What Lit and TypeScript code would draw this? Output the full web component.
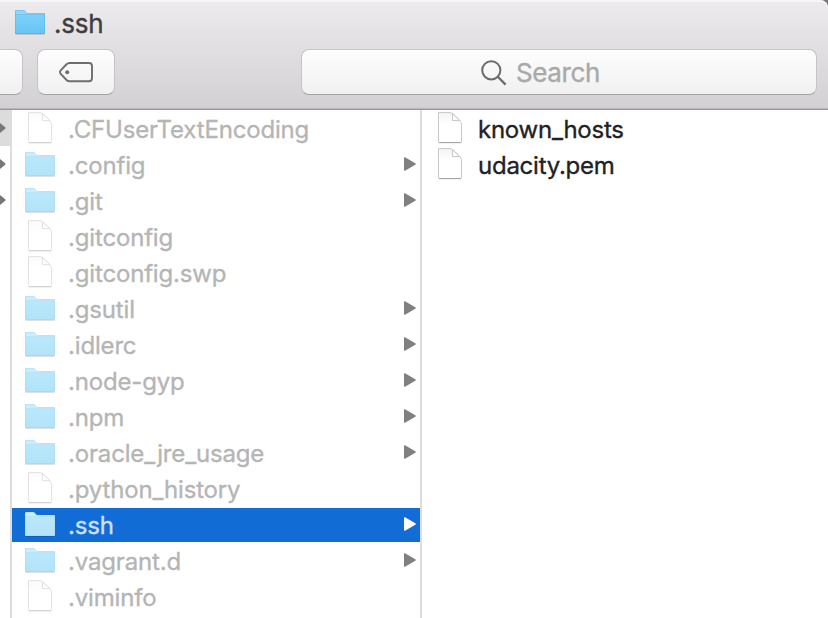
import { LitElement, html, svg, css, nothing } from "lit";
import { customElement, property } from "lit/decorators.js";

type Kind = "file" | "folder";
interface Entry {
  name: string;
  kind: Kind;
  selected?: boolean;
}

const home: Entry[] = [
  { name: ".CFUserTextEncoding", kind: "file" },
  { name: ".config", kind: "folder" },
  { name: ".git", kind: "folder" },
  { name: ".gitconfig", kind: "file" },
  { name: ".gitconfig.swp", kind: "file" },
  { name: ".gsutil", kind: "folder" },
  { name: ".idlerc", kind: "folder" },
  { name: ".node-gyp", kind: "folder" },
  { name: ".npm", kind: "folder" },
  { name: ".oracle_jre_usage", kind: "folder" },
  { name: ".python_history", kind: "file" },
  { name: ".ssh", kind: "folder", selected: true },
  { name: ".vagrant.d", kind: "folder" },
  { name: ".viminfo", kind: "file" },
];

const sshFiles: Entry[] = [
  { name: "known_hosts", kind: "file" },
  { name: "udacity.pem", kind: "file" },
];

@customElement("finder-icon")
class FinderIcon extends LitElement {
  @property() kind: Kind = "file";
  @property({ type: Boolean, reflect: true }) pale = false;
  static styles = css`
    :host { display: block; width: 32px; height: 34px; --edge: #57b5e4; --tab: #8ed8fa; --top: #7bd0f9; --bottom: #67c5f4; --paper: #f4f4f4; --line: #c8c8c8; --base: #a8a8a8; }
    :host([pale]) { --edge: #a9daf0; --tab: #c9eefd; --top: #b9e8fc; --bottom: #b3e3f8; --paper: #fafafa; --line: #e2e2e2; --base: #d2d2d2; }
    svg { display: block; }
    .edge { fill: var(--edge); }
    .tab { fill: var(--tab); }
    .top { stop-color: var(--top); }
    .bottom { stop-color: var(--bottom); }
    .paper { stop-color: var(--paper); }
    .line { stroke: var(--line); }
    .base { stroke: var(--base); }
  `;
  render() {
    return this.kind === "folder"
      ? html`<svg width="32" height="34" viewBox="0 0 32 34">
          <defs>
            <linearGradient id="f" x1="0" y1="0" x2="0" y2="1">
              <stop offset="0" class="top" /><stop offset="1" class="bottom" />
            </linearGradient>
          </defs>
          <path d="M1.5 28.4H30.5" stroke="#000" stroke-opacity=".14" />
          <path class="edge" d="M1 5.2Q1 4 2.2 4H9.2Q10.3 4 11 5L12 6.2Q12.4 6.9 13.4 6.9H29.8Q31 6.9 31 8V27.2Q31 28 30 28H2Q1 28 1 27.2Z" />
          <path class="tab" d="M1.6 7V5.3Q1.6 4.5 2.4 4.5H9.1Q10 4.5 10.6 5.4L11.5 6.6Q12 7.4 13.2 7.4H30.4V8.6H1.6Z" />
          <path d="M1.6 9H30.4V27H1.6Z" fill="url(#f)" />
        </svg>`
      : html`<svg width="32" height="34" viewBox="0 0 32 34">
          <defs>
            <linearGradient id="p" x1="0" y1="0" x2="0" y2="1">
              <stop offset="0" class="paper" /><stop offset=".4" stop-color="#fff" />
            </linearGradient>
          </defs>
          <path class="line" d="M4.5 .6H16Q18.5 .8 21 3.6L25.5 8.2Q27.5 10.3 27.5 12V29.8Q27.5 30.5 26.8 30.5H5.2Q4.5 30.5 4.5 29.8Z" fill="url(#p)" />
          <path class="base" d="M5 30.5H27" />
          <path d="M4.5 31.5H27.5" stroke="#000" stroke-opacity=".05" />
          <path class="line" d="M18.5 1.8V8.5H25.6Z" fill="#fff" />
        </svg>`;
  }
}

@customElement("finder-column")
class FinderColumn extends LitElement {
  @property({ attribute: false }) entries: Entry[] = [];
  @property({ type: Boolean, reflect: true }) dimmed = false;
  static styles = css`
    :host { display: block; padding-top: 2px; box-sizing: border-box; overflow: hidden; }
    .row { display: flex; align-items: center; height: 34px; margin-bottom: 2px; padding-left: 12px; color: #222; }
    .name { flex: 1; margin-left: 12px; padding-top: 2px; white-space: pre; font: 400 24px/34px Inter, "Liberation Sans", sans-serif; letter-spacing: -0.25px; -webkit-text-stroke: 0.35px currentColor; }
    :host([dimmed]) .name { color: #b5b5b5; letter-spacing: -0.17px; }
    .row.selected { background: #116cd6; }
    :host([dimmed]) .selected .name { color: #cfe0f6; }
    .arrow { display: block; margin: 0 4px 2px 0; fill: #808080; }
    .selected .arrow { fill: #fff; }
  `;
  render() {
    return this.entries.map(
      (e) => html`<div class="row ${e.selected ? "selected" : ""}">
        <finder-icon .kind=${e.kind} ?pale=${this.dimmed}></finder-icon>
        <span class="name">${e.name}</span>
        ${e.kind === "folder"
          ? html`<svg class="arrow" width="12" height="14" viewBox="0 0 12 14"><path d="M0 1Q0 0 1 .3L11.3 6.2Q12.3 7 11.3 7.8L1 13.7Q0 14 0 13Z" /></svg>`
          : nothing}
      </div>`
    );
  }
}

@customElement("app-root")
class AppRoot extends LitElement {
  static styles = css`
    :host { display: flex; flex-direction: column; width: 828px; height: 618px; overflow: hidden; background: #fff; font-family: Inter, "Liberation Sans", sans-serif; }
    .window { display: flex; flex-direction: column; height: 618px; background: #77757c; }
    .head { height: 110px; box-sizing: border-box; border-bottom: 1px solid #99979b; box-shadow: inset 0 2px #f6f5f7, inset 0 -1px #b8b6b9; background: linear-gradient(#edebee, #d2d0d3); border-top-right-radius: 8px; }
    .title { display: flex; align-items: center; height: 49px; box-sizing: border-box; padding: 0 0 3px 14px; color: #3d3c3e; font-size: 26px; -webkit-text-stroke: 0.35px currentColor; }
    .title span { margin-left: 8px; letter-spacing: -0.25px; }
    .tools { display: flex; height: 46px; }
    .control { box-sizing: border-box; height: 46px; border: 1px solid #c5c3c6; border-bottom-color: #a5a3a6; border-radius: 8px; background: linear-gradient(#fefefe, #f0f0f0); display: flex; align-items: center; justify-content: center; }
    .edge { width: 23px; border-left: 0; border-radius: 0 8px 8px 0; }
    .tag { width: 78px; margin-left: 14px; }
    .search { width: 516px; margin-left: 186px; color: #a9a9a9; font-size: 26px; justify-content: flex-start; padding-left: 179px; }
    .search span { margin-left: 9px; padding-top: 1px; letter-spacing: -0.4px; -webkit-text-stroke: 0.35px currentColor; }
    .search svg { margin-top: 2px; }
    .body { flex: 1; display: flex; min-height: 0; background: #fff; }
    .parent { width: 10px; border-right: 2px solid #ddd; overflow: hidden; }
    .slot { height: 36px; display: flex; align-items: center; }
    .slot.active { background: #dcdcdc; }
    .slot svg { fill: #777; }
    .home { width: 408px; border-right: 2px solid #ddd; box-sizing: content-box; }
    .files { flex: 1; }
  `;
  render() {
    const arrow = svg`<path d="M0 2L5.2 6.2Q6 7 5.2 7.8L0 12Z"/>`;
    return html`<div class="window">
      <header class="head">
        <div class="title"><finder-icon kind="folder"></finder-icon><span>.ssh</span></div>
        <div class="tools">
          <div class="control edge"></div>
          <div class="control tag">
            <svg width="36" height="22" viewBox="0 0 36 22" fill="none"><path d="M11.5 2H31Q34 2 34 5V17.3Q34 20.3 31 20.3H11.5Q10 20.3 8.5 19L2.5 12.6Q1.4 11.1 2.5 9.6L8.5 3.3Q10 2 11.5 2Z" stroke="#6e6e6e" stroke-width="1.9" /><circle cx="9.2" cy="11.2" r="2" fill="#6e6e6e" /></svg>
          </div>
          <div class="control search">
            <svg width="26" height="26" viewBox="0 0 26 26" fill="none" stroke="#6b6b6b" stroke-width="2"><circle cx="10.3" cy="10.3" r="9.1" /><path d="M16.8 16.8L24.6 24.6" stroke-width="2.3" /></svg>
            <span>Search</span>
          </div>
        </div>
      </header>
      <main class="body">
        <div class="parent">
          ${[true, false, false].map((a) => html`<div class="slot ${a ? "active" : ""}"><svg width="8" height="14">${arrow}</svg></div>`)}
        </div>
        <finder-column class="home" dimmed .entries=${home}></finder-column>
        <finder-column class="files" .entries=${sshFiles}></finder-column>
      </main>
    </div>`;
  }
}
